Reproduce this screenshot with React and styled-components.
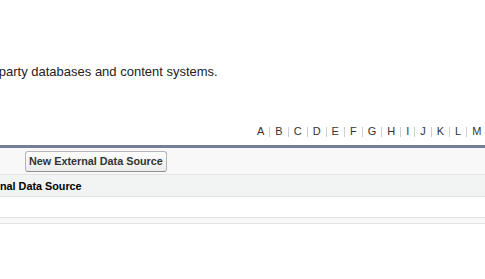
import React from 'react';
import styled, { createGlobalStyle } from 'styled-components';

const GlobalStyle = createGlobalStyle`
  html, body {
    margin: 0;
    padding: 0;
    background: #fff;
    overflow: hidden;
  }
  body {
    font-family: "Liberation Sans", Arial, sans-serif;
    color: #222;
  }
`;

const Viewport = styled.div`
  width: 485px;
  height: 279px;
  overflow: hidden;
`;

// the page is wider than the window; the view is scrolled to the right
const Page = styled.div`
  width: 900px;
  margin-left: -120px;
`;

const Intro = styled.p`
  margin: 64px 0 0;
  padding-left: 1px;
  font-size: 13px;
  line-height: 15px;
  color: #222;
  white-space: nowrap;
`;

const Rolodex = styled.div`
  display: flex;
  align-items: center;
  height: 13px;
  margin-top: 46px;
  padding-left: 372px;
  font-size: 11px;
  line-height: 13px;
`;

const Letter = styled.a`
  flex-shrink: 0;
  padding: 0 5px;
  color: #333;
  text-decoration: none;
`;

const Sep = styled.span`
  flex-shrink: 0;
  width: 1px;
  height: 10px;
  margin-top: 1px;
  background: #cfcfcf;
`;

const Block = styled.div`
  margin-top: 7px;
  border-top: 3px solid #747e96;
`;

const BlockHeader = styled.div`
  display: flex;
  align-items: flex-start;
  height: 27px;
  padding-top: 3px;
  box-sizing: border-box;
  background: #f8f8f8;
  border-bottom: 1px solid #e0e3e5;
`;

const TitleCell = styled.div`
  width: 144px;
`;

const Button = styled.button`
  margin: 0 0 0 1px;
  padding: 3px 3px;
  height: 21px;
  box-sizing: border-box;
  font-family: "Liberation Sans", Arial, sans-serif;
  font-size: 10.8px;
  line-height: 13px;
  font-weight: bold;
  color: #333;
  background: linear-gradient(to bottom, #fdfdfd, #ececec);
  border: 1px solid #b5b5b5;
  border-bottom-color: #8f8f8f;
  border-radius: 3px;
`;

const Row = styled.div`
  display: flex;
  align-items: center;
  height: ${p => p.$h}px;
  background: ${p => p.$bg};
  border-bottom: 1px solid ${p => p.$line || '#e0e3e5'};
`;

const Cell = styled.div`
  width: ${p => (p.$w ? `${p.$w}px` : 'auto')};
  padding-left: 5px;
  box-sizing: border-box;
  font-size: 10.8px;
  font-weight: ${p => (p.$head ? 'bold' : 'normal')};
  color: #000;
  white-space: nowrap;
`;

const letters = ['A', 'B', 'C', 'D', 'E', 'F', 'G', 'H', 'I', 'J', 'K', 'L', 'M', 'N', 'O', 'P', 'Q', 'R', 'S', 'T', 'U', 'V', 'W', 'X', 'Y', 'Z', 'Other', 'All'];

export default function App() {
  return (
    <Viewport>
      <GlobalStyle />
      <Page>
        <Intro>Access data in third-party databases and content systems.</Intro>
        <Rolodex>
          {letters.map((l, i) => (
            <React.Fragment key={l}>
              {i > 0 && <Sep />}
              <Letter href="#">{l}</Letter>
            </React.Fragment>
          ))}
        </Rolodex>
        <Block>
          <BlockHeader>
            <TitleCell />
            <Button>New External Data Source</Button>
          </BlockHeader>
          <Row $h={21} $bg="#f2f3f3">
            <Cell $w={88} $head>Action</Cell>
            <Cell $head>External Data Source</Cell>
          </Row>
          <Row $h={20} $bg="#fff" $line="#e3e3e3" />
          <Row $h={5} $bg="#f8f8f8" $line="#e3e3e3" />
        </Block>
      </Page>
    </Viewport>
  );
}
